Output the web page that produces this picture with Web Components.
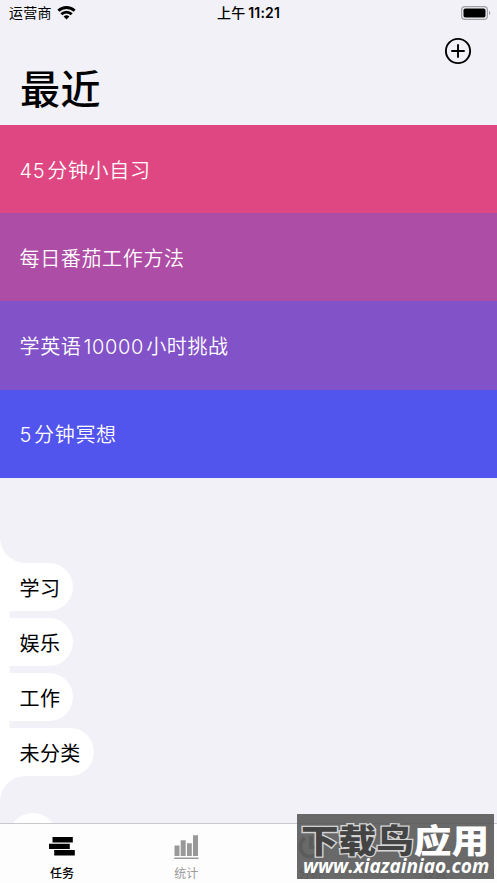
<!DOCTYPE html>
<html lang="zh-CN">
<head>
<meta charset="utf-8">
<title>最近</title>
<style>
    body {
        margin: 0;
        background: #f2f1f7;
        font-family: Inter, "Noto Sans CJK SC", sans-serif;
        color: #000;
    }
</style>
</head>
<body>
<phone-screen>
    <status-bar slot="top" carrier="运营商" period="上午" time="11:21"></status-bar>
    <page-header slot="top">最近</page-header>
    <task-row color="#df4783">45 分钟小自习</task-row>
    <task-row color="#ae4da6">每日番茄工作方法</task-row>
    <task-row color="#8252c8">学英语 10000 小时挑战</task-row>
    <task-row color="#5255ed">5 分钟冥想</task-row>
    <category-list>
        <category-chip>学习</category-chip>
        <category-chip>娱乐</category-chip>
        <category-chip>工作</category-chip>
        <category-chip>未分类</category-chip>
    </category-list>
    <add-chip></add-chip>
    <tab-bar slot="bottom">
        <tab-item active label="任务">
            <svg width="26" height="19" viewBox="0 0 26 19"><path d="M3.5 0h20.3v5.5H3.5zM0 6.7h20.8v5.2H0zM5.2 13h20.6v5.4H5.2z"/></svg>
        </tab-item>
        <tab-item label="统计">
            <svg width="25" height="24" viewBox="0 0 25 24" fill="currentColor"><path d="M.5 10.5h5V21h-5zM6.7 5.3h5V21h-5zM13 8.2h4.8V21H13zM19 .3h5V21h-5zM.2 22.5h24.3V24H.2z"/></svg>
        </tab-item>
        <tab-item label="分析">
            <svg width="25" height="25" viewBox="0 0 25 25" fill="none" stroke="currentColor" stroke-width="4"><path d="M7 4a10 10 0 1 0 15 11"/><path d="M13 2v11h10"/></svg>
        </tab-item>
        <tab-item label="设置">
            <svg width="25" height="25" viewBox="0 0 25 25" fill="currentColor"><circle cx="12" cy="5" r="5"/><circle cx="5" cy="17" r="5"/><circle cx="19" cy="17" r="5"/></svg>
        </tab-item>
    </tab-bar>
    <site-badge slot="badge" url="www.xiazainiao.com"><span slot="dark">下载鸟</span>应用</site-badge>
</phone-screen>

<script>
function attach(el, html) {
    const template = document.createElement("template");
    template.innerHTML = html;
    el.attachShadow({ mode: "open" });
    el.shadowRoot.appendChild(template.content.cloneNode(true));
}

class PhoneScreen extends HTMLElement {
    constructor() {
        super();
        attach(this, `
<style>
    :host {
        display: flex;
        flex-direction: column;
        position: relative;
        height: 883px;
        overflow: hidden;
    }
    main {
        flex: 1;
        min-height: 0;
        overflow: hidden;
    }
</style>
<slot name="top"></slot>
<main><slot></slot></main>
<slot name="bottom"></slot>
<slot name="badge"></slot>`);
    }
}

class StatusBar extends HTMLElement {
    constructor() {
        super();
        attach(this, `
<style>
    :host {
        display: grid;
        grid-template-columns: 1fr auto 1fr;
        align-items: center;
        box-sizing: border-box;
        height: 25px;
        padding: 0 6px 0 9px;
        font-size: 14px;
        line-height: 25px;
    }
    .left { display: flex; align-items: center; gap: 5px; }
    .left span { letter-spacing: 0.3px; }
    .clock {
        display: flex;
        gap: 3px;
        font-weight: 500;
        letter-spacing: 0.15px;
        margin-left: -3px;
    }
    .time { font-weight: 600; }
    .battery { justify-self: end; }
    svg { display: block; }
</style>
<div class="left">
    <span class="carrier"></span>
    <svg width="19" height="14" viewBox="0 0 18 14" fill="none" stroke="#000" stroke-width="2.8">
        <path d="M.9 4.8a11.6 11.6 0 0 1 16.2 0M3.8 8.3a7.4 7.4 0 0 1 10.4 0"/>
        <path d="M9 13.4 6.1 10.6a4.1 4.1 0 0 1 5.8 0z" fill="#000" stroke="none"/>
    </svg>
</div>
<div class="clock"><span class="period"></span><span class="time"></span></div>
<svg class="battery" width="30" height="14" viewBox="0 0 30 14">
    <rect x=".6" y=".6" width="25.8" height="12.8" rx="3.4" fill="none" stroke="#a0a0a5" stroke-width="1.2"/>
    <rect x="2.5" y="2.4" width="22" height="9.2" rx="1.8"/>
    <path d="M28 4.8q2.8 2.2 0 4.4z" fill="#a0a0a5"/>
</svg>`);
        for (const name of ["carrier", "period", "time"]) {
            this.shadowRoot.querySelector("." + name).textContent = this.getAttribute(name);
        }
    }
}

class PageHeader extends HTMLElement {
    constructor() {
        super();
        attach(this, `
<style>
    :host {
        display: flex;
        justify-content: space-between;
        box-sizing: border-box;
        height: 100px;
        padding: 12px 25px 0 20px;
    }
    h1 {
        margin: 23px 0 0;
        font-size: 40px;
        line-height: 60px;
        font-weight: 500;
        letter-spacing: 0.5px;
    }
</style>
<h1><slot></slot></h1>
<svg width="28" height="28" viewBox="0 0 28 28" fill="none" stroke="#000" stroke-width="1.9">
    <circle cx="14" cy="14" r="12.1"/>
    <path d="M14 8v12M8 14h12" stroke-linecap="round"/>
</svg>`);
    }
}

class TaskRow extends HTMLElement {
    constructor() {
        super();
        attach(this, `
<style>
    :host {
        display: flex;
        align-items: center;
        box-sizing: border-box;
        height: 88.2px;
        padding: 0 20px 0 19.5px;
        color: #fff;
        font-size: 20px;
        font-weight: 350;
        letter-spacing: 0.65px;
        word-spacing: -4.2px;
        white-space: nowrap;
    }
</style>
<span><slot></slot></span>`);
        this.style.background = this.getAttribute("color");
    }
}

class CategoryList extends HTMLElement {
    constructor() {
        super();
        attach(this, `
<style>
    :host { display: block; margin-top: 60.2px; }
    /* concave corners that join the strip to the left edge */
    .corner {
        width: 25px;
        height: 25px;
        background: radial-gradient(circle at 100% 0, #f2f1f7 24.5px, #fff 25px);
    }
    .corner.end { background: radial-gradient(circle at 100% 100%, #f2f1f7 24.5px, #fff 25px); }
    .chips {
        display: flex;
        flex-direction: column;
        align-items: flex-start;
        gap: 7px;
        background: linear-gradient(#fff, #fff) 0 0 / 9.5px 100% no-repeat;
    }
</style>
<div class="corner"></div>
<div class="chips"><slot></slot></div>
<div class="corner end"></div>`);
    }
}

class CategoryChip extends HTMLElement {
    constructor() {
        super();
        attach(this, `
<style>
    :host {
        display: flex;
        align-items: center;
        box-sizing: border-box;
        height: 48.1px;
        padding: 1px 13px 0 19.5px;
        border-radius: 0 24px 24px 0;
        background: #fff;
        font-size: 20px;
        letter-spacing: 0.4px;
    }
</style>
<span><slot></slot></span>`);
    }
}

class AddChip extends HTMLElement {
    constructor() {
        super();
        attach(this, `
<style>
    :host {
        display: block;
        width: 48px;
        height: 48px;
        margin: 12px 0 0 9px;
        border-radius: 50%;
        background: #fff;
    }
</style>`);
    }
}

class TabBar extends HTMLElement {
    constructor() {
        super();
        attach(this, `
<style>
    :host {
        display: grid;
        grid-template-columns: repeat(4, 1fr);
        box-sizing: border-box;
        height: 60px;
        border-top: 1px solid #c9c8cd;
        background: #fdfdfd;
    }
</style>
<slot></slot>`);
    }
}

class TabItem extends HTMLElement {
    constructor() {
        super();
        attach(this, `
<style>
    :host {
        display: flex;
        flex-direction: column;
        align-items: center;
        color: #999;
        font-size: 12px;
    }
    :host([active]) { color: #000; font-weight: 500; }
    .icon {
        display: flex;
        align-items: center;
        height: 25px;
        margin-top: 10px;
    }
    .label { margin-top: 6px; line-height: 18px; }
</style>
<div class="icon"><slot></slot></div>
<div class="label"></div>`);
        this.shadowRoot.querySelector(".label").textContent = this.getAttribute("label");
    }
}

class SiteBadge extends HTMLElement {
    constructor() {
        super();
        attach(this, `
<style>
    :host {
        position: absolute;
        left: 297px;
        top: 814px;
        width: 197px;
        height: 65px;
        box-sizing: border-box;
        padding: 1px 0 0 4px;
        background: rgba(83, 83, 83, 0.87);
        color: #fff;
        white-space: nowrap;
    }
    .name {
        display: flex;
        width: max-content;
        font: 900 33px/48px "Noto Sans CJK SC", sans-serif;
        transform: scaleX(1.14);
        transform-origin: 0 50%;
    }
    .dark {
        color: #444;
        -webkit-text-stroke: 2.6px #d4d4d4;
        paint-order: stroke fill;
    }
    .url {
        margin: -7px 0 0 2px;
        font: italic 700 19.1px/21px "Open Sans", sans-serif;
    }
</style>
<div class="name"><span class="dark"><slot name="dark"></slot></span><span><slot></slot></span></div>
<div class="url"></div>`);
        this.shadowRoot.querySelector(".url").textContent = this.getAttribute("url");
    }
}

window.customElements.define("phone-screen", PhoneScreen);
window.customElements.define("status-bar", StatusBar);
window.customElements.define("page-header", PageHeader);
window.customElements.define("task-row", TaskRow);
window.customElements.define("category-list", CategoryList);
window.customElements.define("category-chip", CategoryChip);
window.customElements.define("add-chip", AddChip);
window.customElements.define("tab-bar", TabBar);
window.customElements.define("tab-item", TabItem);
window.customElements.define("site-badge", SiteBadge);
</script>
</body>
</html>
